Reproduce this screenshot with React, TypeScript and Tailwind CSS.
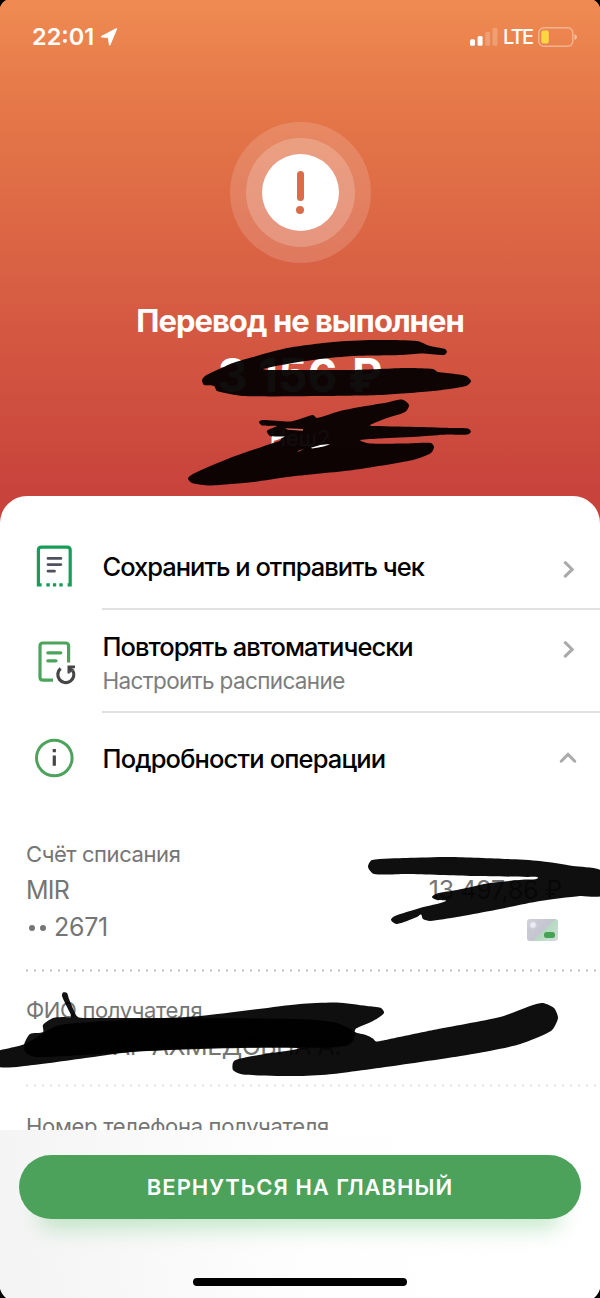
import type { ReactNode } from "react";

type Point = [number, number];

function smooth(points: Point[]): string {
  const n = points.length;
  let d = `M${points[0][0]} ${points[0][1]}`;
  for (let i = 0; i < n; i++) {
    const p0 = points[(i - 1 + n) % n];
    const p1 = points[i];
    const p2 = points[(i + 1) % n];
    const p3 = points[(i + 2) % n];
    const len = Math.hypot(p2[0] - p1[0], p2[1] - p1[1]);
    const a = len / (4.5 * (Math.hypot(p2[0] - p0[0], p2[1] - p0[1]) || 1));
    const b = len / (4.5 * (Math.hypot(p3[0] - p1[0], p3[1] - p1[1]) || 1));
    d += `C${p1[0] + (p2[0] - p0[0]) * a} ${p1[1] + (p2[1] - p0[1]) * a} ${p2[0] - (p3[0] - p1[0]) * b} ${p2[1] - (p3[1] - p1[1]) * b} ${p2[0]} ${p2[1]}`;
  }
  return d + "Z";
}

const amountMark: Point[] = [[202, 380], [205, 376], [217, 370], [233, 363], [253, 357], [287, 348], [333, 342], [373, 340], [417, 341], [430, 346], [445, 349], [447, 352], [444, 355], [422, 353.5], [400, 355], [353, 356], [320, 359], [287, 364], [263, 369], [266, 370], [307, 370], [353, 370], [407, 368], [433, 369], [438, 372], [455, 374], [466, 376], [471, 381], [466, 386], [433, 391], [380, 395], [320, 396], [243, 396], [217, 391], [214, 386], [204, 385]];

const senderMark: Point[] = [[259, 422], [262, 420], [290, 421.5], [300, 419], [313, 415], [317, 418], [340, 411], [360, 407], [387, 402.5], [402, 399.5], [409, 405], [405, 412], [387, 418], [372, 424], [370, 425.5], [375, 426], [420, 427], [453, 428], [468, 428.5], [471, 431.5], [468, 434.5], [447, 434.5], [420, 436.5], [380, 438.5], [360, 440], [362, 441.5], [370, 443.5], [407, 443.5], [431, 443], [434, 447], [431, 453], [413, 460], [353, 470], [287, 477], [253, 482], [210, 485.5], [192, 483], [188, 478], [197, 472], [230, 458], [270, 444], [281, 440], [279, 437.5], [270, 436], [267, 431], [275, 427], [277, 426], [262, 425.5]];

const balanceMark: Point[] = [[368, 867], [372, 860], [407, 858], [450, 857], [507, 859], [540, 861], [573, 866], [603, 871.5], [603, 895], [580, 896], [540, 901], [490, 911], [457, 917], [430, 921], [423, 919], [421, 914.5], [417, 917], [397, 924], [391, 920], [395, 916], [420, 908], [446, 901], [437, 900], [432, 897], [437, 893.5], [457, 890], [490, 883], [525, 879.5], [538, 878], [527, 877], [473, 876], [407, 874], [374, 874]];

const recipientMark: Point[] = [[-3, 1052], [10, 1048], [25, 1044], [60, 1025], [200, 1016], [300, 1004], [337, 1002.5], [367, 1006], [381, 1008], [384, 1013], [373, 1021], [356, 1028.5], [355, 1032], [366, 1035], [373, 1038.5], [376, 1041.5], [390, 1039], [433, 1030], [500, 1017], [533, 1005], [543, 1003], [554, 1008], [558, 1018], [551, 1031], [517, 1045], [467, 1055], [400, 1065], [333, 1074], [300, 1076], [243, 1074.5], [233, 1070], [234, 1061], [253, 1056], [298, 1048], [140, 1051], [100, 1056], [33, 1065], [-3, 1066.5]];

const recipientDenseMark: Point[] = [[24, 1045], [30, 1034], [43, 1032], [43, 1025], [53, 1018], [64, 1017], [71, 1017], [68, 1009], [62, 996], [63, 992.5], [67, 993], [69, 999], [76, 1015], [79, 1017.5], [90, 1018], [133, 1018], [300, 1019], [337, 1023], [355, 1033], [350, 1044], [333, 1047.5], [300, 1047.5], [200, 1048], [133, 1052], [100, 1054], [37, 1057], [26, 1053]];

function Scribbles() {
  return (
    <svg className="pointer-events-none absolute inset-0" width="600" height="1298" viewBox="0 0 600 1298" aria-hidden="true">
      <path d={smooth(amountMark)} fill="#030000" fillOpacity=".95" />
      <path d={smooth(senderMark)} fill="#030000" fillOpacity=".95" />
      <path d="M272 436.5H285L280 439L272 441.5ZM311 447.8Q320 444.3 330 444Q326 446.5 312 448.6Z" fill="#fff" />
      <path d="M285 428.3L303 429V430.8L288 429.8ZM297 451.3L304 449L299 451.4Z" fill="#d9665c" />
      <path d={smooth(balanceMark)} fill="#000" fillOpacity=".94" />
      <path d={smooth(recipientMark)} fill="#000" fillOpacity=".94" />
      <path d={smooth(recipientDenseMark)} fill="#000" fillOpacity=".93" />
      <path d="M0 0H6Q2 2 0 7ZM600 0H594Q598 2 600 7ZM0 1298H6Q2 1295 0 1289ZM600 1298H594Q598 1295 600 1289Z" fill="#000" />
    </svg>
  );
}

function StatusBar() {
  return (
    <div className="flex h-[74px] items-center justify-between pr-[23px] pl-[32px] text-white">
      <div className="flex items-center gap-[3px]">
        <span className="w-[65px] text-[23.5px] leading-none font-semibold tracking-[0px] whitespace-nowrap">22:01</span>
        <svg width="18" height="18" viewBox="0 0 17 18" fill="currentColor" stroke="currentColor" strokeWidth="1.6" strokeLinejoin="round"><path d="M15.8 1 1.3 8.6 8 9.3 9.2 16.6Z" /></svg>
      </div>
      <div className="flex items-center">
        <svg width="28" height="18" viewBox="0 0 28 18" fill="currentColor">
          <rect x="0" y="11.2" width="5" height="6.5" rx="1.5" />
          <rect x="7.6" y="8" width="5" height="9.7" rx="1.5" />
          <rect x="15.2" y="4" width="5" height="13.7" rx="1.5" opacity=".22" />
          <rect x="22.5" y="0" width="5" height="17.7" rx="1.5" opacity=".22" />
        </svg>
        <span className="ml-[5px] w-[29px] text-[20px] leading-none font-medium tracking-[-1.7px]">LTE</span>
        <svg className="ml-[6px]" width="39" height="21" viewBox="0 0 39 21">
          <rect x=".8" y=".8" width="34" height="18.5" rx="5" fill="none" stroke="#fff" strokeOpacity=".38" strokeWidth="1.5" />
          <path d="M36.5 6.9Q39 8.3 39 10.1T36.5 13.3Z" fill="#fff" fillOpacity=".5" />
          <rect x="3.3" y="3.6" width="7.5" height="13" rx="2" fill="#fbd843" />
        </svg>
      </div>
    </div>
  );
}

function ReceiptIcon() {
  return (
    <svg width="40" height="44" viewBox="0 0 40 44" fill="none" strokeWidth="3.2">
      <path d="M8.6 41.8H5.4V7.1Q5.4 4.1 8.4 4.1H34.2Q37.2 4.1 37.2 7.1V41.8H34.6" stroke="#169e58" />
      <path d="M13.3 41.8h3.5M19.9 41.8h3.3M26.3 41.8h3.4" stroke="#169e58" />
      <path d="M15 15.4H27.9M15 21.6H27.9M15 28.2H21.5" stroke="#50525f" strokeWidth="2.8" strokeLinecap="round" />
    </svg>
  );
}

function RepeatIcon() {
  return (
    <svg width="44" height="46" viewBox="0 0 44 46" fill="none">
      <path d="M18 39.2H8Q5 39.2 5 36.2V5Q5 2 8 2H30.5Q33.6 2 33.6 5V21.5" stroke="#4ca45c" strokeWidth="3.2" />
      <path d="M12.8 11.8H25.8M12.8 19.8H21" stroke="#4ca45c" strokeWidth="3.2" strokeLinecap="round" />
      <path d="M25.6 27.5A8 8 0 1 0 37.7 29.5" stroke="#464646" strokeWidth="3.2" />
      <path d="M32.5 24.5H40V27.3L34.8 27.5V32.4H32.5Z" fill="#464646" />
      <path d="M33 25L39 28.5 35 32Z" fill="#464646" />
    </svg>
  );
}

function InfoIcon() {
  return (
    <svg width="40" height="40" viewBox="0 0 40 40" fill="none">
      <circle cx="20.3" cy="20" r="17.8" stroke="#4ca45c" strokeWidth="3" />
      <path d="M20.3 17.5V27.7M20.3 11V14.2" stroke="#464646" strokeWidth="3.2" />
    </svg>
  );
}

function Chevron({ up = false }: { up?: boolean }) {
  return up ? (
    <svg width="18" height="12" viewBox="0 0 18 12" fill="none"><path d="M2.2 9.2 9 2.4 15.8 9.2" stroke="#aaa" strokeWidth="3" strokeLinecap="round" /></svg>
  ) : (
    <svg width="12" height="18" viewBox="0 0 12 18" fill="none"><path d="M2.3 2.7 9.2 9.4 2.3 16.1" stroke="#aaa" strokeWidth="3" strokeLinecap="round" /></svg>
  );
}

function RowTitle({ children, className }: { children: ReactNode; className: string }) {
  return <div className={`text-[25.5px] leading-[34px] font-medium whitespace-nowrap text-black ${className}`}>{children}</div>;
}

function Dots({ className }: { className: string }) {
  return <div className={`h-[3px] shrink-0 bg-[length:8px_3px] ${className}`} />;
}

export default function App() {
  return (
    <div className="relative flex h-[1298px] w-[600px] flex-col overflow-hidden bg-[#c8433c] font-['Inter','Liberation_Sans',sans-serif]">
      <header className="-mb-[30px] h-[526px] shrink-0 bg-[linear-gradient(180deg,#ef8b52_0px,#e67a49_90px,#d85f43_280px,#c8433c_490px)]">
        <StatusBar />
        <div className="mx-auto mt-[48px] flex size-[141px] items-center justify-center rounded-full bg-white/15">
          <div className="flex size-[109px] items-center justify-center rounded-full bg-white/20">
            <div className="flex size-[77px] flex-col items-center justify-center gap-[5px] rounded-full bg-white">
              <div className="h-[30px] w-[7px] rounded-full bg-[#d96c49]" />
              <div className="size-[8px] rounded-full bg-[#d96c49]" />
            </div>
          </div>
        </div>
        <h1 className="mt-[38px] text-center text-[31px] leading-[40px] font-bold tracking-[-1px] whitespace-nowrap text-white">Перевод не выполнен</h1>
        <div className="mt-[6px] text-center text-[46px] leading-[56px] font-bold whitespace-nowrap text-white">3 156 ₽</div>
        <div className="mt-[21px] text-center text-[22px] leading-[28px] text-white">Неш2</div>
      </header>

      <main className="relative flex h-[634px] shrink-0 flex-col overflow-hidden rounded-t-[27px] bg-white">
        <section className="flex h-[114px] shrink-0 pl-[33px]">
          <div className="mt-[47px] w-[69px] shrink-0"><ReceiptIcon /></div>
          <div className="flex flex-1 justify-between border-b-2 border-[#e1e1e3] pr-[25px]">
            <RowTitle className="mt-[54px] pl-[0.5px] tracking-[-1px]">Сохранить и отправить чек</RowTitle>
            <div className="mt-[64px]"><Chevron /></div>
          </div>
        </section>
        <section className="flex h-[103px] shrink-0 pl-[35px]">
          <div className="mt-[31px] w-[67px] shrink-0"><RepeatIcon /></div>
          <div className="flex flex-1 justify-between border-b-2 border-[#e1e1e3] pr-[25px] pl-[0.5px]">
            <div>
              <RowTitle className="mt-[20px] tracking-[-0.98px]">Повторять автоматически</RowTitle>
              <div className="text-[22.5px] leading-[34px] tracking-[-0.63px] whitespace-nowrap text-[#7d7d7d]">Настроить расписание</div>
            </div>
            <div className="mt-[30px]"><Chevron /></div>
          </div>
        </section>
        <section className="flex h-[123px] shrink-0 pr-[23px] pl-[34px]">
          <div className="mt-[25px] w-[68.5px] shrink-0"><InfoIcon /></div>
          <RowTitle className="mt-[29px] flex-1 tracking-[-0.85px]">Подробности операции</RowTitle>
          <div className="mt-[39px]"><Chevron up /></div>
        </section>

        <section className="flex h-[133px] shrink-0 justify-between pl-[26px] text-[#757575]">
          <div>
            <div className="text-[22px] leading-[36px] tracking-[-0.42px] whitespace-nowrap">Счёт списания</div>
            <div className="text-[25px] leading-[37px] tracking-[-0.8px]">MIR</div>
            <div className="flex items-center text-[25px] leading-[37px] tracking-[-0.3px]">
              <span className="mr-[8px] ml-[3px] flex gap-[5px]"><i className="size-[6px] rounded-full bg-[#757575]" /><i className="size-[6px] rounded-full bg-[#757575]" /></span>2671
            </div>
          </div>
          <div className="flex flex-col items-end pt-[36px] pr-[38px]">
            <div className="text-[25px] leading-[37px] tracking-[-0.35px] whitespace-nowrap">13 497,86 ₽</div>
            <div className="mt-[9.5px] mr-[4px] flex h-[22px] w-[31px] items-end justify-end rounded-[3px] bg-[radial-gradient(circle_at_6px_6px,#ebebf2_2px,transparent_4px),linear-gradient(135deg,#cfcfda_0%,#c4c5d0_52%,#b4dac0_55%,#d5dcdf_100%)] p-[3px]">
              <div className="h-[6px] w-[11px] rounded-[2.5px] bg-[#46a355]" />
            </div>
          </div>
        </section>
        <Dots className="ml-[23px] bg-[radial-gradient(circle,#bdbdbd_0.9px,transparent_1.3px)]" />
        <section className="h-[112px] shrink-0 pt-[20px] pl-[26px] text-[#757575]">
          <div className="text-[22px] leading-[36px] tracking-[-0.35px] whitespace-nowrap">ФИО получателя</div>
          <div className="pl-[87px] text-[25px] leading-[37px] tracking-[-0.5px] whitespace-nowrap">АР АХМЕДОВНА А.</div>
        </section>
        <Dots className="ml-[23px] bg-[radial-gradient(circle,#e0e0e0_0.9px,transparent_1.3px)]" />
        <div className="mt-[21px] shrink-0 pl-[26px] text-[22px] leading-[36px] tracking-[-0.3px] whitespace-nowrap text-[#757575]">Номер телефона получателя</div>
      </main>

      <footer className="relative flex h-[168px] shrink-0 flex-col items-center bg-[linear-gradient(80deg,#f3f3f3_0%,#f8f8f8_22%,#fefefe_50%,#ffffff_100%)] pt-[25px]">
        <button className="h-[64px] w-[562px] rounded-full bg-[#4ca25b] text-[22px] font-semibold tracking-[1px] whitespace-nowrap text-white shadow-[0_28px_22px_-20px_rgba(76,185,95,0.36)]">ВЕРНУТЬСЯ НА ГЛАВНЫЙ</button>
        <div className="mt-[59px] h-[8px] w-[214px] rounded-full bg-black" />
      </footer>
      <Scribbles />
    </div>
  );
}
